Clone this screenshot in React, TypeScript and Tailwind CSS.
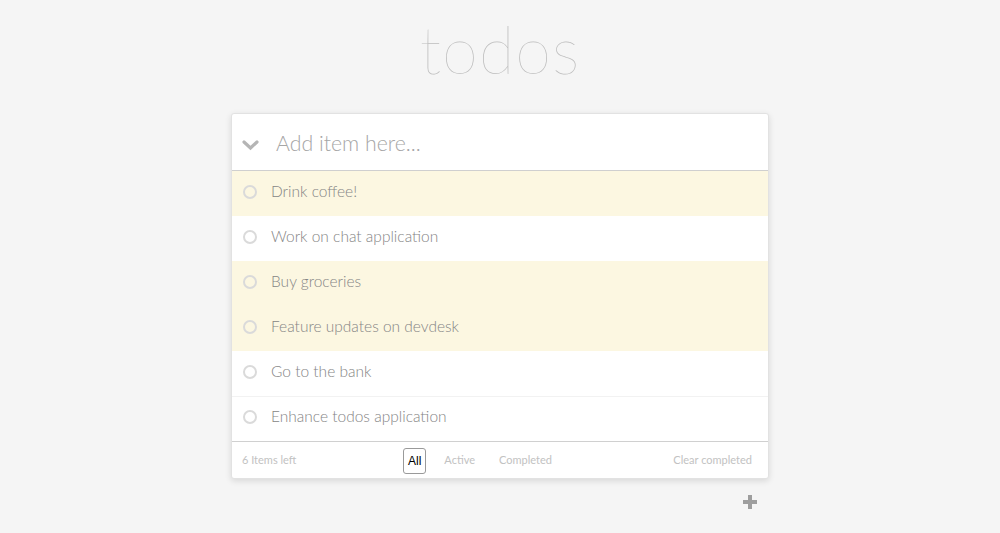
import React from 'react';

const todos = [
  { id: 1, text: 'Drink coffee!', highlight: true },
  { id: 2, text: 'Work on chat application', highlight: false },
  { id: 3, text: 'Buy groceries', highlight: true },
  { id: 4, text: 'Feature updates on devdesk', highlight: true },
  { id: 5, text: 'Go to the bank', highlight: false },
  { id: 6, text: 'Enhance todos application', highlight: false },
];

export default function App() {
  return (
    <div className="min-h-[533px] bg-[#f5f5f5] font-['Lato',sans-serif] flex flex-col items-center">
      <h1 className="mt-[9px] h-[104px] text-[65px] font-thin leading-[80px] text-[#bdbdbd] tracking-[1px]">
        todos
      </h1>

      <div className="w-[538px]">
        <div className="rounded-[3px] border border-[#e2e2e2] bg-white shadow-[0_2px_6px_rgba(0,0,0,0.12)] overflow-hidden">
          <div className="flex h-[57px] items-center border-b border-[#cfcfcf] pt-[3px]">
            <svg className="ml-[10px] mr-[17px] mt-[4px]" width="17" height="11" viewBox="0 0 17 11">
              <path d="M2 2 L8.5 8 L15 2" fill="none" stroke="#b5b5b5" strokeWidth="3.2" strokeLinecap="round" />
            </svg>
            <span className="text-[21.3px] font-light text-[#a6a6a6]">Add item here...</span>
          </div>

          {todos.map((todo, index) => (
            <div
              key={todo.id}
              className={`flex h-[45px] items-center pb-[4px] ${todo.highlight ? 'bg-[#fcf7e1]' : 'bg-white'} ${
                index > 0 && !todo.highlight && !todos[index - 1].highlight ? 'border-t border-[#f2f2f2]' : ''
              }`}
            >
              <span className="ml-[11px] mr-[14px] h-[14px] w-[14px] rounded-full border-2 border-[#dadada]" />
              <span className="text-[15.5px] font-light text-[#858585]">{todo.text}</span>
            </div>
          ))}

          <div className="flex h-[37px] items-center border-t border-[#d0d0d0] px-[10px] pt-[1px] text-[11px] text-[#c2c2c2]">
            <span className="w-[161px]">6 Items left</span>
            <div className="flex items-center">
              <span className="rounded-[3px] border border-[#9a9a9a] px-[4px] py-[3px] text-[12px] font-['Liberation_Sans',sans-serif] text-black">
                All
              </span>
              <span className="ml-[18px]">Active</span>
              <span className="ml-[24px]">Completed</span>
            </div>
            <span className="ml-auto mr-[6px]">Clear completed</span>
          </div>
        </div>

        <div className="flex justify-end pr-[12px] pt-[16px]">
          <svg width="14" height="14" viewBox="0 0 14 14">
            <rect x="5" y="0" width="4" height="14" fill="#9e9e9e" />
            <rect x="0" y="5" width="14" height="4" fill="#9e9e9e" />
          </svg>
        </div>
      </div>
    </div>
  );
}
